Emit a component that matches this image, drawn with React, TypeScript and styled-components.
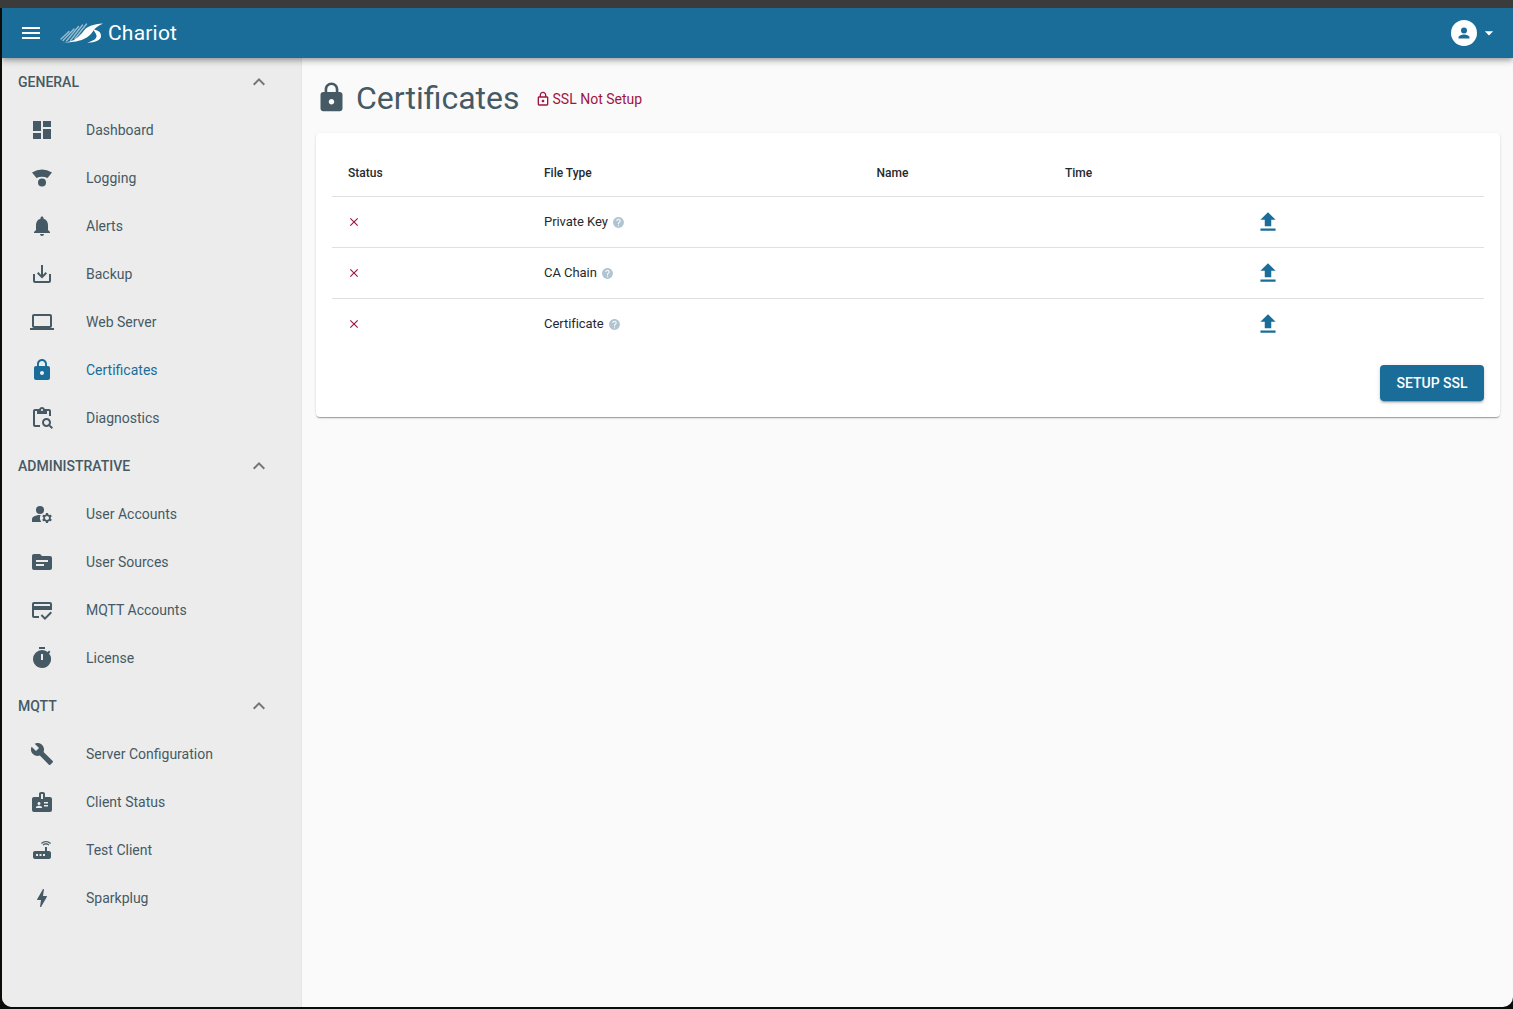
import React from "react";
import styled, { createGlobalStyle } from "styled-components";
import {
  MdMenu, MdExpandLess, MdDashboard, MdNotifications, MdSaveAlt, MdLaptop, MdLock, MdOutlineLock,
  MdOutlineContentPasteSearch, MdManageAccounts, MdTopic, MdOutlineCreditScore, MdTimer, MdBuild,
  MdBadge, MdRouter, MdBolt, MdFileUpload, MdClose, MdHelp, MdArrowDropDown,
} from "react-icons/md";

const Global = createGlobalStyle`
  html, body { margin: 0; padding: 0; height: 100%; background: #0c0c08; overflow: hidden; }
  body { font-family: Roboto, "Liberation Sans", sans-serif; }
  #root { height: 100%; }
`;

const Screen = styled.div`
  height: 100vh;
  display: flex;
  flex-direction: column;
  box-sizing: border-box;
  padding-bottom: 2px;
`;
const TitleStrip = styled.div`
  height: 8px;
  flex: none;
  background: #3b3b3b;
`;
const Window = styled.div`
  flex: 1;
  min-height: 0;
  margin-left: 2px;
  display: flex;
  flex-direction: column;
  background: #fafafa;
  border-radius: 0 0 10px 10px;
  overflow: hidden;
`;
const AppBar = styled.header`
  height: 50px;
  flex: none;
  display: flex;
  align-items: center;
  padding: 0 14px 0 17px;
  background: #1a6d99;
  color: #fff;
  position: relative;
  z-index: 2;
  box-shadow: 0 2px 4px -1px rgba(0,0,0,.2), 0 4px 5px 0 rgba(0,0,0,.14), 0 1px 10px 0 rgba(0,0,0,.12);
`;
const Brand = styled.div`
  display: flex;
  align-items: center;
  margin: -1px 0 0 17px;
  gap: 5px;
  font-size: 21px;
  line-height: 24px;
  letter-spacing: .2px;
`;
const UserMenu = styled.div`
  margin-left: auto;
  display: flex;
  align-items: center;
  gap: 2px;
`;
const Body = styled.div`
  flex: 1;
  min-height: 0;
  display: flex;
`;
const Sidebar = styled.nav`
  width: 299px;
  flex: none;
  background: #ececec;
  border-right: 1px solid #e6e6e6;
`;
const GroupHeader = styled.div`
  height: 48px;
  display: flex;
  align-items: center;
  justify-content: space-between;
  padding: 0 30px 0 16px;
  font-size: 14px;
  font-weight: 500;
  color: #455a64;
  svg { color: #757575; }
`;
const NavItem = styled.div<{ $active?: boolean }>`
  height: 48px;
  display: flex;
  align-items: center;
  padding-left: 28px;
  font-size: 14px;
  color: ${(p) => (p.$active ? "#1a6d99" : "#455a64")};
`;
const NavIcon = styled.span`
  width: 56px;
  flex: none;
  display: flex;
  align-items: center;
`;
const Main = styled.main`
  flex: 1;
  min-width: 0;
  padding: 14px 13px 0 14px;
`;
const PageHead = styled.div`
  height: 51px;
  margin-bottom: 10px;
  display: flex;
  align-items: center;
  color: #455a64;
`;
const PageIcon = styled.span`
  display: flex;
  margin: 0 8px 0 -1px;
`;
const PageTitle = styled.h1`
  margin: 0;
  font-size: 32px;
  font-weight: 400;
  line-height: 48px;
`;
const SslState = styled.div`
  display: flex;
  align-items: center;
  gap: 2px;
  margin: 2px 0 0 15px;
  font-size: 14px;
  color: #a0153e;
`;
const Card = styled.section`
  background: #fff;
  border-radius: 4px;
  padding: 16px;
  height: 284px;
  box-sizing: border-box;
  box-shadow: 0 2px 1px -1px rgba(0,0,0,.2), 0 1px 1px 0 rgba(0,0,0,.14), 0 1px 3px 0 rgba(0,0,0,.12);
`;
const Row = styled.div<{ $head?: boolean; $last?: boolean }>`
  display: grid;
  grid-template-columns: 196px 332.5px 188.5px 207px 1fr;
  align-items: center;
  height: ${(p) => (p.$head ? "48px" : "51px")};
  border-bottom: 1px solid ${(p) => (p.$last ? "transparent" : "#e0e0e0")};
  box-sizing: border-box;
  font-size: ${(p) => (p.$head ? "12px" : "13px")};
  letter-spacing: ${(p) => (p.$head ? "0" : "-.05px")};
  font-weight: ${(p) => (p.$head ? 500 : 400)};
  color: #1f2a30;
`;
const Cell = styled.div`
  padding-left: 16px;
  display: flex;
  align-items: center;
  gap: 4px;
`;
const FileCell = styled(Cell)`
  margin-top: -1px;
`;
const StatusCell = styled(Cell)`
  padding-left: 15px;
  color: #a0153e;
`;
const UploadCell = styled(Cell)`
  padding-left: 0;
  color: #1a6d99;
  margin-left: -1px;
`;
const Help = styled.span`
  display: flex;
  color: #b0c4d2;
  margin-top: 1px;
`;
const CardFooter = styled.div`
  display: flex;
  justify-content: flex-end;
  margin-top: 15px;
`;
const PrimaryButton = styled.button`
  height: 36px;
  width: 104px;
  border: 0;
  border-radius: 4px;
  background: #1a6d99;
  color: #fff;
  font: 500 14px Roboto, sans-serif;
  box-shadow: 0 3px 1px -2px rgba(0,0,0,.2), 0 2px 2px 0 rgba(0,0,0,.14), 0 1px 5px 0 rgba(0,0,0,.12);
`;

const LoggingIcon = () => (
  <svg width="24" height="24" viewBox="0 0 24 24" fill="currentColor">
    <path d="M2 6.500Q12 .5 22 6.500L17.500 12Q12 9.500 6.500 12Z" />
    <circle cx="12" cy="16.600" r="4" />
  </svg>
);

const Logo = () => (
  <svg width="43" height="20" viewBox="0 0 43 20" fill="none" stroke="#fff" strokeLinecap="round">
    <g strokeWidth="1.400" strokeOpacity=".55">
      <path d="M1 16 L9 8.500" />
      <path d="M3 17.500 L14 6" />
      <path d="M6.500 18 L18.500 3.500" />
      <path d="M10.500 17.500 L22.500 2" />
      <path d="M15 15.500 L26.500 1" />
    </g>
    <path d="M3 19.500C13 19.500 19 14 24 7.500 27 3.500 33 1 43 .5 38 3 35 5 33.500 7.500 30 13 24 19.500 3 19.500Z" fill="#fff" stroke="none" />
    <path d="M33 6.500C38 7 41 9 41 13 41 17 36 19.500 27 19.800 34 17.500 37 15.500 36.500 12.500 36 10.500 34.500 8.500 33 6.500Z" fill="#fff" stroke="none" />
  </svg>
);

const Avatar = () => (
  <svg width="26" height="26" viewBox="0 0 26 26">
    <circle cx="13" cy="13" r="13" fill="#fff" />
    <circle cx="13" cy="10.500" r="3" fill="#1a6d99" />
    <path d="M7.500 18.500v-1c0-2 3.500-3 5.500-3s5.500 1 5.500 3v1z" fill="#1a6d99" />
  </svg>
);

type Item = { label: string; icon: React.ReactNode; active?: boolean };
const groups: { title: string; items: Item[] }[] = [
  {
    title: "GENERAL",
    items: [
      { label: "Dashboard", icon: <MdDashboard size={24} /> },
      { label: "Logging", icon: <LoggingIcon /> },
      { label: "Alerts", icon: <MdNotifications size={24} /> },
      { label: "Backup", icon: <MdSaveAlt size={24} /> },
      { label: "Web Server", icon: <MdLaptop size={24} /> },
      { label: "Certificates", icon: <MdLock size={24} />, active: true },
      { label: "Diagnostics", icon: <MdOutlineContentPasteSearch size={24} /> },
    ],
  },
  {
    title: "ADMINISTRATIVE",
    items: [
      { label: "User Accounts", icon: <MdManageAccounts size={24} /> },
      { label: "User Sources", icon: <MdTopic size={24} /> },
      { label: "MQTT Accounts", icon: <MdOutlineCreditScore size={24} /> },
      { label: "License", icon: <MdTimer size={24} /> },
    ],
  },
  {
    title: "MQTT",
    items: [
      { label: "Server Configuration", icon: <MdBuild size={24} /> },
      { label: "Client Status", icon: <MdBadge size={24} /> },
      { label: "Test Client", icon: <MdRouter size={24} /> },
      { label: "Sparkplug", icon: <MdBolt size={24} /> },
    ],
  },
];
const files = ["Private Key", "CA Chain", "Certificate"];

export default function App() {
  return (
    <Screen>
      <Global />
      <TitleStrip />
      <Window>
        <AppBar>
          <MdMenu size={24} />
          <Brand>
            <Logo />
            Chariot
          </Brand>
          <UserMenu>
            <Avatar />
            <MdArrowDropDown size={20} />
          </UserMenu>
        </AppBar>
        <Body>
          <Sidebar>
            {groups.map((g) => (
              <div key={g.title}>
                <GroupHeader>
                  {g.title}
                  <MdExpandLess size={24} />
                </GroupHeader>
                {g.items.map((it) => (
                  <NavItem key={it.label} $active={it.active}>
                    <NavIcon>{it.icon}</NavIcon>
                    {it.label}
                  </NavItem>
                ))}
              </div>
            ))}
          </Sidebar>
          <Main>
            <PageHead>
              <PageIcon><MdLock size={33} /></PageIcon>
              <PageTitle>Certificates</PageTitle>
              <SslState><MdOutlineLock size={16} />SSL Not Setup</SslState>
            </PageHead>
            <Card>
              <Row $head>
                <Cell>Status</Cell>
                <Cell>File Type</Cell>
                <Cell>Name</Cell>
                <Cell>Time</Cell>
                <Cell />
              </Row>
              {files.map((f, i) => (
                <Row key={f} $last={i === files.length - 1}>
                  <StatusCell><MdClose size={14} /></StatusCell>
                  <FileCell>
                    {f}
                    <Help><MdHelp size={13} /></Help>
                  </FileCell>
                  <Cell />
                  <Cell />
                  <UploadCell><MdFileUpload size={26} /></UploadCell>
                </Row>
              ))}
              <CardFooter>
                <PrimaryButton>SETUP SSL</PrimaryButton>
              </CardFooter>
            </Card>
          </Main>
        </Body>
      </Window>
    </Screen>
  );
}
